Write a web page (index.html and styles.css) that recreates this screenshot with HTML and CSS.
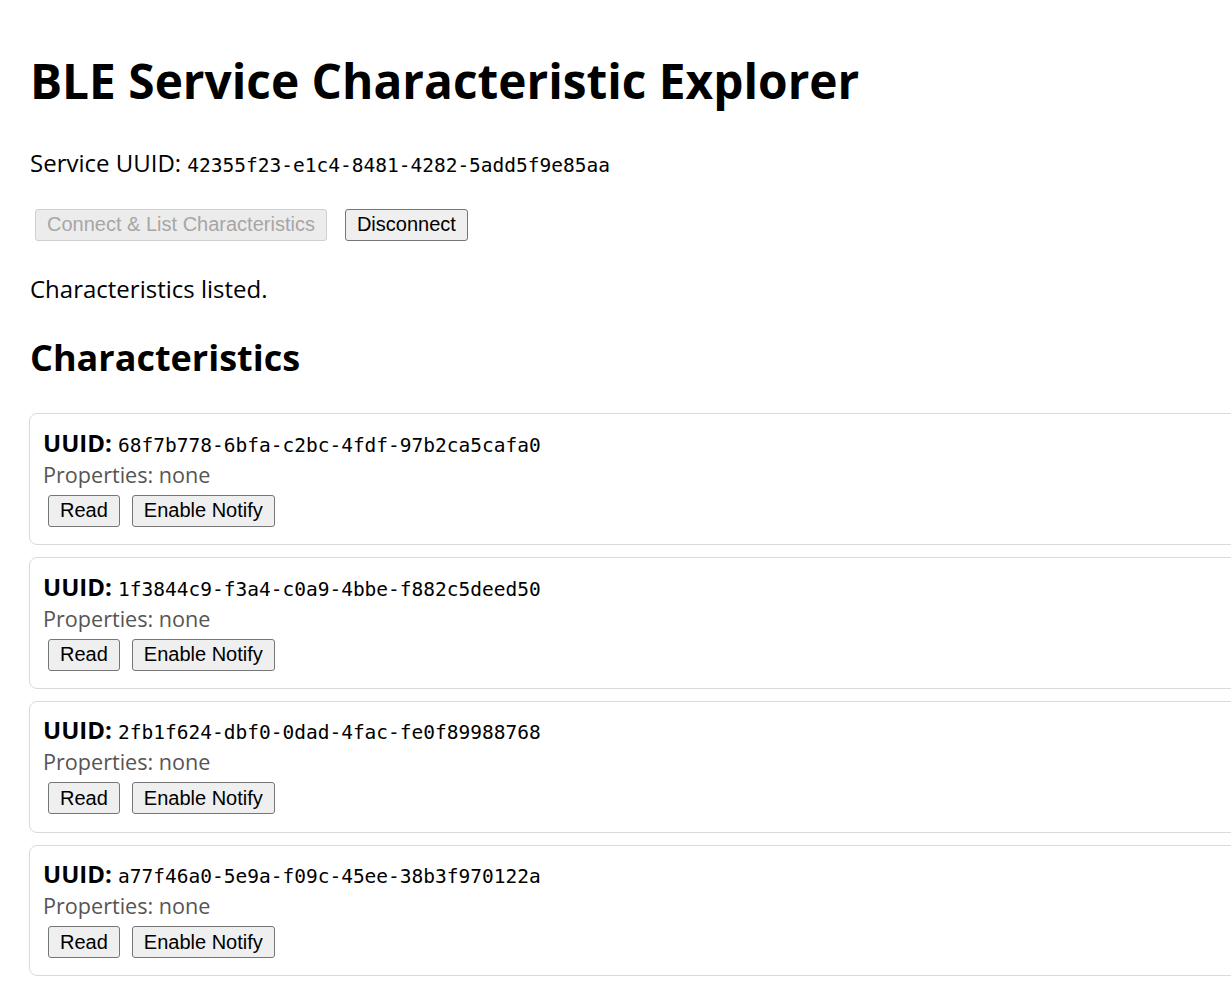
FILE: index.html
```html
<!DOCTYPE html>
<html>
<head>
<meta charset="utf-8">
<title>BLE Service Characteristic Explorer</title>
<link rel="stylesheet" href="styles.css">
</head>
<body>
<main class="page">
  <h1 class="title">BLE Service Characteristic Explorer</h1>
  <p class="service">Service UUID: <code class="mono">42355f23-e1c4-8481-4282-5add5f9e85aa</code></p>
  <div class="actions">
    <button class="btn" disabled>Connect &amp; List Characteristics</button>
    <button class="btn">Disconnect</button>
  </div>
  <p class="status">Characteristics listed.</p>
  <h2 class="subtitle">Characteristics</h2>
  <div class="list">
    <div class="card">
      <div class="uuid"><strong>UUID:</strong> <code class="mono">68f7b778-6bfa-c2bc-4fdf-97b2ca5cafa0</code></div>
      <div class="props">Properties: none</div>
      <div class="card-actions"><button class="btn">Read</button><button class="btn">Enable Notify</button></div>
    </div>
    <div class="card">
      <div class="uuid"><strong>UUID:</strong> <code class="mono">1f3844c9-f3a4-c0a9-4bbe-f882c5deed50</code></div>
      <div class="props">Properties: none</div>
      <div class="card-actions"><button class="btn">Read</button><button class="btn">Enable Notify</button></div>
    </div>
    <div class="card">
      <div class="uuid"><strong>UUID:</strong> <code class="mono">2fb1f624-dbf0-0dad-4fac-fe0f89988768</code></div>
      <div class="props">Properties: none</div>
      <div class="card-actions"><button class="btn">Read</button><button class="btn">Enable Notify</button></div>
    </div>
    <div class="card">
      <div class="uuid"><strong>UUID:</strong> <code class="mono">a77f46a0-5e9a-f09c-45ee-38b3f970122a</code></div>
      <div class="props">Properties: none</div>
      <div class="card-actions"><button class="btn">Read</button><button class="btn">Enable Notify</button></div>
    </div>
  </div>
</main>
</body>
</html>
```

FILE: styles.css
```css
html, body {
  margin: 0;
  padding: 0;
  background: #fff;
  overflow-x: hidden;
}
body {
  font-family: "Open Sans", "Noto Sans", sans-serif;
  font-size: 24px;
  color: #000;
}
.page {
  padding: 0 0 0 30px;
  display: flex;
  flex-direction: column;
}
.title {
  font-size: 47.8px;
  font-weight: 700;
  margin: 48px 0 0;
  line-height: 1.36;
}
.service {
  margin: 34px 0 0;
  line-height: 1.36;
}
.mono {
  font-family: "DejaVu Sans Mono", monospace;
  font-size: 19.5px;
}
.actions {
  display: flex;
  gap: 18px;
  margin: 29px 0 0 5px;
}
.btn {
  font-family: "Liberation Sans", Arial, sans-serif;
  font-size: 20px;
  padding: 3.5px 11px;
  border: 1.5px solid #767676;
  border-radius: 3px;
  background: #efefef;
  color: #000;
  line-height: 23px;
}
.btn:disabled {
  color: #a6a6a6;
  border-color: #cfcfcf;
  background: #ececec;
}
.status {
  margin: 32px 0 0;
  line-height: 1.36;
}
.subtitle {
  font-size: 36px;
  font-weight: 700;
  margin: 29px 0 0;
  line-height: 1.36;
}
.list {
  display: flex;
  flex-direction: column;
  gap: 12px;
  margin: 30px -60px 0 -1px;
}
.card {
  border: 1px solid #dadada;
  border-radius: 8px;
  padding: 14.5px 13px 17.3px;
}
.uuid {
  font-size: 24px;
  line-height: 28px;
}
.props {
  font-size: 21.6px;
  color: #555;
  line-height: 30px;
}
.card-actions {
  display: flex;
  gap: 12px;
  margin: 5px 0 0 5px;
}
```
